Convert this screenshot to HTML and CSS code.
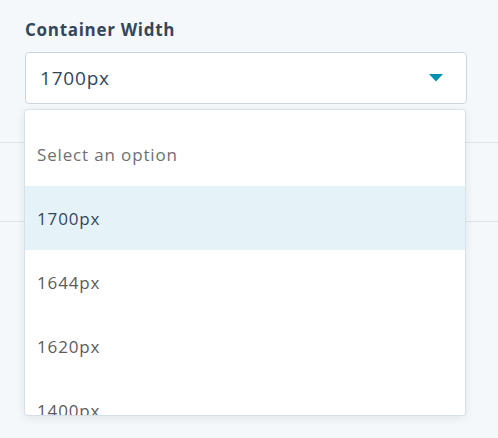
FILE: index.html
```html
<!DOCTYPE html>
<html>
<head>
<meta charset="utf-8">
<link rel="stylesheet" href="styles.css">
</head>
<body>
<div class="page">
  <div class="field">
    <div class="label">Container Width</div>
    <div class="select">
      <span class="value">1700px</span>
      <svg class="caret" width="14" height="8" viewBox="0 0 14 8"><path d="M0 0 H14 L7 7.5 Z" fill="#0091ae"/></svg>
    </div>
  </div>
  <div class="bg-rows">
    <div class="bg-row first"></div>
    <div class="bg-row second"></div>
  </div>
  <div class="menu">
    <div class="option placeholder">Select an option</div>
    <div class="option selected">1700px</div>
    <div class="option">1644px</div>
    <div class="option">1620px</div>
    <div class="option">1400px</div>
  </div>
</div>
</body>
</html>
```
FILE: styles.css
```css
html, body {
  margin: 0;
  padding: 0;
  background: #f5f8fa;
  font-family: "Open Sans", "Lato", sans-serif;
}
.page {
  position: relative;
  width: 498px;
  height: 438px;
  overflow: hidden;
}
.field {
  padding: 18px 31px 0 25px;
}
.label {
  font-size: 17px;
  font-weight: 700;
  color: #33475b;
  line-height: 24px;
  letter-spacing: 0.7px;
  margin-bottom: 10px;
}
.select {
  box-sizing: border-box;
  height: 52px;
  background: #fff;
  border: 1px solid #cbd6e2;
  border-radius: 4px;
  display: flex;
  align-items: center;
  justify-content: space-between;
  padding: 0 23px 0 14px;
}
.value {
  font-size: 19px;
  letter-spacing: 0.8px;
  color: #33475b;
}
.caret {
  display: block;
}
.bg-rows {
  margin-top: 38px;
}
.bg-row {
  border-top: 1px solid #dfe3eb;
}
.bg-row.first {
  height: 78px;
}
.menu {
  position: absolute;
  top: 110px;
  left: 25px;
  width: 440px;
  height: 305px;
  background: #fff;
  border-radius: 3px;
  box-shadow: 0 0 0 1px rgba(203, 214, 226, 0.6), 0 2px 10px rgba(45, 62, 80, 0.12);
  padding-top: 12px;
  box-sizing: border-box;
  overflow: hidden;
}
.option {
  height: 64px;
  display: flex;
  align-items: center;
  padding-left: 12px;
  font-size: 17px;
  letter-spacing: 0.85px;
  color: #5b5b5b;
}
.option.placeholder {
  color: #6f6f6f;
}
.option.selected {
  background: #e5f3f8;
  color: #33475b;
}
```
